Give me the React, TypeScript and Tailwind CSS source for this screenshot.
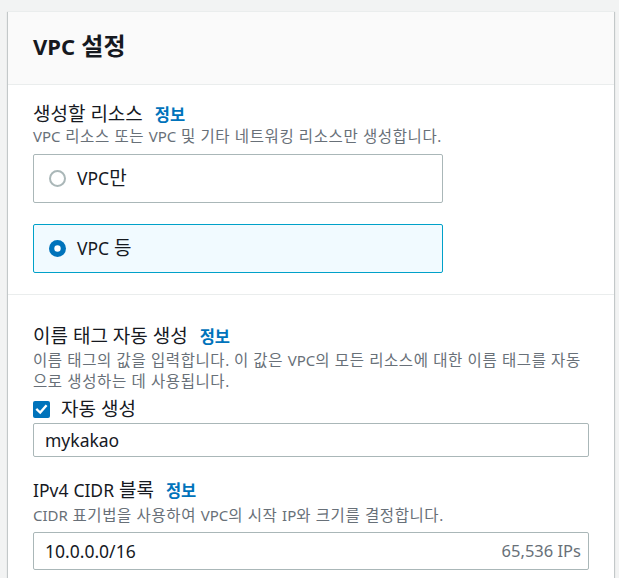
import React from "react";

const font = { fontFamily: '"Noto Sans", "Noto Sans CJK KR", sans-serif' };

function Mixed({ text, latinClass }: { text: string; latinClass: string }) {
  const parts = text.split(/([A-Za-z0-9.,/]+)/);
  return (
    <>
      {parts.map((p, i) =>
        p === "" ? null : /^[A-Za-z0-9.,/]+$/.test(p) ? (
          <span key={i} className={latinClass}>
            {p}
          </span>
        ) : (
          <React.Fragment key={i}>{p}</React.Fragment>
        )
      )}
    </>
  );
}

function Radio({ checked }: { checked: boolean }) {
  return checked ? (
    <svg width="17" height="17" viewBox="0 0 17 17" className="shrink-0">
      <circle cx="8.5" cy="8.5" r="8.5" fill="#0073bb" />
      <circle cx="8.5" cy="8.5" r="3.2" fill="#ffffff" />
    </svg>
  ) : (
    <svg width="17" height="17" viewBox="0 0 17 17" className="shrink-0">
      <circle cx="8.5" cy="8.5" r="7.5" fill="#ffffff" stroke="#aab7b8" strokeWidth="2" />
    </svg>
  );
}

function Info() {
  return <span className="ml-[12px] text-[16.5px] font-semibold text-[#0073bb]">정보</span>;
}

function Label({ text }: { text: string }) {
  return (
    <div className="text-[19px] leading-[22px] text-[#16191f] flex items-baseline">
      <span>
        <Mixed text={text} latinClass="text-[17.5px]" />
      </span>
      <Info />
    </div>
  );
}

function Desc({ text }: { text: string }) {
  return <Mixed text={text} latinClass="text-[15px] tracking-normal" />;
}

export default function App() {
  return (
    <div className="min-h-screen bg-[#f2f3f3] pt-[11px] pl-[8px] pr-[5px]" style={font}>
      <div className="bg-white shadow-[0_1px_1px_0_rgba(0,28,36,0.3),1px_1px_1px_0_rgba(0,28,36,0.15),-1px_1px_1px_0_rgba(0,28,36,0.15)] border-t border-[#eaeded]">
        <div className="h-[73px] bg-[#fafafa] border-b border-[#eaeded] px-[25px] pb-[4px] flex items-center">
          <h2 className="text-[24px] font-bold text-[#16191f] leading-none">
            <span className="text-[22px]">VPC</span> 설정
          </h2>
        </div>

        <div className="px-[25px] pt-[18px] pb-[21px] border-b border-[#eaeded]">
          <Label text="생성할 리소스" />
          <div className="text-[15.5px] tracking-[0.6px] leading-[21px] text-[#687078]">
            <Desc text="VPC 리소스 또는 VPC 및 기타 네트워킹 리소스만 생성합니다." />
          </div>
          <div className="mt-[7px] flex flex-col gap-[21px]">
            <div className="w-[410px] h-[49px] border border-[#aab7b8] rounded-[2px] flex items-center pl-[15px] gap-[11px]">
              <Radio checked={false} />
              <span className="text-[19px] text-[#16191f]">
                <span className="text-[17.5px]">VPC</span>만
              </span>
            </div>
            <div className="w-[410px] h-[49px] border border-[#00a1c9] bg-[#f1faff] rounded-[2px] flex items-center pl-[15px] gap-[11px]">
              <Radio checked={true} />
              <span className="text-[19px] text-[#16191f]">
                <span className="text-[17.5px]">VPC</span> 등
              </span>
            </div>
          </div>
        </div>

        <div className="px-[25px] pt-[30px] pb-[20px]">
          <Label text="이름 태그 자동 생성" />
          <div className="mt-[2px] text-[15.5px] tracking-[0.6px] leading-[21px] text-[#687078]">
            <Desc text="이름 태그의 값을 입력합니다. 이 값은 VPC의 모든 리소스에 대한 이름 태그를 자동" />
            <br />
            <Desc text="으로 생성하는 데 사용됩니다." />
          </div>
          <div className="mt-[6px] h-[22px] flex items-center gap-[11px]">
            <span className="w-[17px] h-[17px] rounded-[2px] bg-[#0073bb] flex items-center justify-center shrink-0">
              <svg width="13" height="13" viewBox="0 0 13 13">
                <path d="M2.2 6.8 L5.2 9.6 L10.8 3.2" fill="none" stroke="#ffffff" strokeWidth="2.4" strokeLinecap="square" />
              </svg>
            </span>
            <span className="text-[19px] text-[#16191f]">자동 생성</span>
          </div>
          <div className="mt-[3px] h-[34px] border border-[#aab7b8] rounded-[2px] flex items-center pl-[11px] text-[17.5px] text-[#16191f]">
            mykakao
          </div>

          <div className="mt-[22px]">
            <Label text="IPv4 CIDR 블록" />
          </div>
          <div className="mt-[3px] text-[15.5px] tracking-[0.6px] leading-[21px] text-[#687078]">
            <Desc text="CIDR 표기법을 사용하여 VPC의 시작 IP와 크기를 결정합니다." />
          </div>
          <div className="mt-[6px] h-[38px] border border-[#aab7b8] rounded-[2px] flex items-center justify-between pl-[11px] pr-[7px]">
            <span className="text-[17.5px] text-[#16191f]">10.0.0.0/16</span>
            <span className="text-[16.5px] text-[#687078]">65,536 IPs</span>
          </div>
        </div>
      </div>
    </div>
  );
}
